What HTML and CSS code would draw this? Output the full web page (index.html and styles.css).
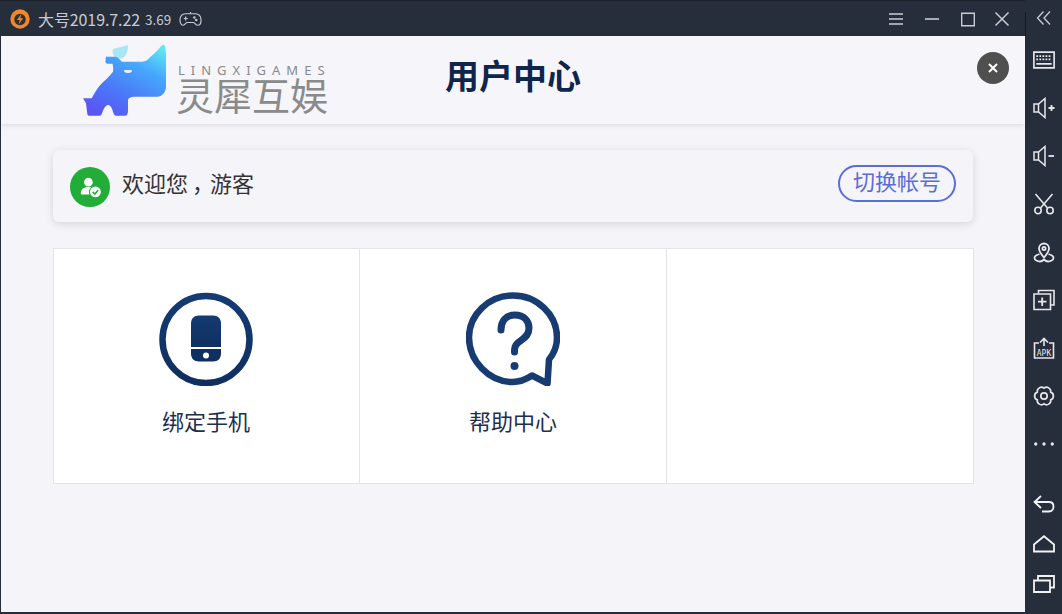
FILE: index.html
```html
<!DOCTYPE html>
<html lang="en">
<head>
    <meta charset="UTF-8">
    <meta name="viewport" content="width=device-width, initial-scale=1.0">
    <title>用户中心</title>
    <link rel="stylesheet" href="styles.css">
</head>
<body>
    <div id="window">
        <div id="main">
            <div id="titlebar">
                <svg class="app-logo" viewBox="0 0 20 20">
                    <circle cx="10" cy="10" r="9.700" fill="#f0872a"/>
                    <circle cx="10" cy="10.500" r="5.800" fill="#2f3038"/>
                    <path d="M11.500 4.800 6.800 11h3l-1.300 4.500 4.700-6.200h-3z" fill="#f0872a"/>
                </svg>
                <span class="app-name">大号2019.7.22</span>
                <span class="app-version">3.69</span>
                <svg class="gamepad" viewBox="0 0 24 16" fill="none" stroke="#c9ccd2" stroke-width="1.200">
                    <path d="M6.500 2.500h11c3 0 5.500 2.700 5.500 6.500 0 3.300-1.500 5.500-3.500 5.500-2.200 0-2.800-2.800-4.800-2.800H8.800c-2 0-2.600 2.800-4.800 2.800C2.500 14.500 1 12.300 1 9c0-3.800 2.500-6.500 5.500-6.500z"/>
                    <path d="M12 2.500V.8M5 7.500h4M7 5.500v4"/>
                    <circle cx="16" cy="6.500" r=".7"/>
                    <circle cx="18" cy="9" r=".7"/>
                </svg>
                <div class="window-controls">
                    <svg viewBox="0 0 16 16" fill="none" stroke="#c9ccd2" stroke-width="1.600"><path d="M1 3h14M1 8h14M1 13h14"/></svg>
                    <svg viewBox="0 0 16 16" fill="none" stroke="#c9ccd2" stroke-width="1.600"><path d="M1 8h14"/></svg>
                    <svg viewBox="0 0 16 16" fill="none" stroke="#c9ccd2" stroke-width="1.400"><path d="M1.700 2.200h12.600v12.600H1.700z"/></svg>
                    <svg viewBox="0 0 16 16" fill="none" stroke="#c9ccd2" stroke-width="1.500"><path d="M1.500 1.500l13 13M14.500 1.500l-13 13"/></svg>
                </div>
            </div>

            <div id="content">
                <div class="header">
                    <div class="brand">
                        <svg class="rhino" viewBox="0 0 84 72">
                            <defs>
                                <linearGradient id="rhino-fill" x1="0.85" y1="0" x2="0.25" y2="1">
                                    <stop offset="0" stop-color="#5ee6f7"/>
                                    <stop offset="0.3" stop-color="#46a8fb"/>
                                    <stop offset="0.65" stop-color="#4a7bf8"/>
                                    <stop offset="1" stop-color="#5a55f5"/>
                                </linearGradient>
                            </defs>
                            <path d="M30 5c5-1 11-3 15-4 0 5-1 10-5 13-3 1-6 0-8-1-2-2-3-5-2-8z" fill="#a9e6f5"/>
                            <path d="M24 12.700h8c3 0 5 3 7 5h18c3 0 6-.5 8-2.500 3-3 8-7 13-13 2-2 3-2 4 0 1 4 1 8 1 11v29c0 6-4 10.500-9 10.500H52c-4 0-7 1-7 4v10c0 3-1 5-3 5H33c-1 0-2-1-3-4-1-4-3-6.700-5-6.700s-4 3-5.500 7c-1 3-1.500 3.700-3 3.700H6c-1 0-1.500-.7-1.700-2L3 59.300 0 54.300h8.700C11 50 14 45 17 41.300c4-4.500 9-8 13-13.600.5-2.700 0-6-.5-8h-5c-1.500 0-2-1-2-2.500 0-3 .5-5 1.500-5z" fill="url(#rhino-fill)"/>
                            <path d="M41 26h8c0 2-1 3-4 3s-4-1-4-3z" fill="#e6f1fe"/>
                        </svg>
                        <div class="brand-text">
                            <div class="brand-en">LINGXIGAMES</div>
                            <div class="brand-cn">灵犀互娱</div>
                        </div>
                    </div>
                    <h1 class="page-title">用户中心</h1>
                    <div class="header-right">
                        <button class="close-btn" type="button">
                            <svg viewBox="0 0 12 12" fill="none" stroke="#fff" stroke-width="2"><path d="M2 2l8 8M10 2l-8 8"/></svg>
                        </button>
                    </div>
                </div>

                <div class="welcome-card">
                    <div class="avatar">
                        <svg viewBox="0 0 24 24" fill="#fff">
                            <circle cx="10.500" cy="7.500" r="4"/>
                            <path d="M3.500 18c0-4 3-6 7-6 1 0 2 .2 2.500.4-1.200 1-2 2.600-2 4.200 0 1 .2 1.700.6 2.400H5c-1 0-1.500-.3-1.500-1z"/>
                            <circle cx="17" cy="16.500" r="5"/>
                            <path d="M14.500 16.500l2 2 3-3.500" fill="none" stroke="#22ac38" stroke-width="1.400"/>
                        </svg>
                    </div>
                    <span class="welcome-text">欢迎您<span class="comma">，</span>游客</span>
                    <button class="switch-btn" type="button">切换帐号</button>
                </div>

                <div class="menu-grid">
                    <div class="menu-item">
                        <svg class="menu-icon" viewBox="0 -0.500 94 94">
                            <defs>
                                <linearGradient id="navy-v" x1="0" y1="0" x2="0" y2="1">
                                    <stop offset="0" stop-color="#153b73"/>
                                    <stop offset="1" stop-color="#0f2f5f"/>
                                </linearGradient>
                            </defs>
                            <circle cx="47" cy="47" r="43.500" fill="none" stroke="url(#navy-v)" stroke-width="6.500"/>
                            <path d="M32 31c0-5 3-8 8-8h14c5 0 8 3 8 8v23.500H32z" fill="url(#navy-v)"/>
                            <path d="M32 56.500h30V61c0 5-3 8-8 8H40c-5 0-8-3-8-8z" fill="#0f2f5f"/>
                            <circle cx="47" cy="63" r="3" fill="#fff"/>
                        </svg>
                        <span class="menu-label">绑定手机</span>
                    </div>
                    <div class="menu-item">
                        <svg class="menu-icon" viewBox="0 0 94 94" fill="none" stroke="#173c72" stroke-width="6.500" stroke-linecap="round" stroke-linejoin="round">
                            <path d="M47 3.500c24 0 44 19 44 42 0 9-3 16-8 22l-1.500 24-15.500-8c-6 4-12 6.500-19.500 6.500C23 90 3 69 3 45.500 3 22.500 23 3.500 47 3.500z"/>
                            <path d="M35 38c0-9 5-15 14-15s14 6 14 13c0 6-3 9-8 12.500-5 3-6.500 5.500-6.500 9.500v2" stroke-width="7"/>
                            <circle cx="48.500" cy="74" r="3" fill="#173c72" stroke-width="2"/>
                        </svg>
                        <span class="menu-label">帮助中心</span>
                    </div>
                    <div class="menu-item"></div>
                </div>
            </div>
        </div>

        <div id="sidebar">
            <div class="side-top">
                <svg viewBox="0 0 16 16" fill="none" stroke="#c9ccd2" stroke-width="1.300"><path d="M7.500 1.500 1.500 8l6 6.500M14 1.500 8 8l6 6.500"/></svg>
            </div>
            <div class="side-item">
                <svg viewBox="0 0 20 16" fill="none" stroke="#e6e8ec" stroke-width="1.500">
                    <path d="M.8.800h18.400v14.400H.8z"/>
                    <path d="M3 4.500h14M3 7.500h14" stroke-width="1.600" stroke-dasharray="1.600 1.200"/>
                    <path d="M3 11.500h14" stroke-width="1.600"/>
                </svg>
            </div>
            <div class="side-item">
                <svg viewBox="0 0 22 22" fill="none" stroke="#e6e8ec" stroke-width="1.500">
                    <path d="M1 7h4.500L12 1.500v19L5.500 15H1z"/>
                    <path d="M5.500 7v8"/>
                    <path d="M15.500 11h6M18.500 8v6" stroke-width="1.800"/>
                </svg>
            </div>
            <div class="side-item">
                <svg viewBox="0 0 22 22" fill="none" stroke="#e6e8ec" stroke-width="1.500">
                    <path d="M1 7h4.500L12 1.500v19L5.500 15H1z"/>
                    <path d="M5.500 7v8"/>
                    <path d="M15.500 11h5.500" stroke-width="1.800"/>
                </svg>
            </div>
            <div class="side-item">
                <svg viewBox="0 0 22 22" fill="none" stroke="#e6e8ec" stroke-width="1.600">
                    <path d="M2.500 1 14.500 15M19.500 1 7.500 15"/>
                    <circle cx="5" cy="17.500" r="3.200"/>
                    <circle cx="17" cy="17.500" r="3.200"/>
                </svg>
            </div>
            <div class="side-item">
                <svg viewBox="0 0 22 22" fill="none" stroke="#e6e8ec" stroke-width="1.800">
                    <path d="M11 16.500C8 13 6 10.500 6 7.500a5 5 0 0 1 10 0c0 3-2 5.500-5 9z"/>
                    <circle cx="11" cy="7.500" r="1.600"/>
                    <path d="M6.500 13C3.500 14 1.500 15.500 1.500 17c0 2 3 3.500 5.500 3.500 2 0 3-1 4-2 1 1 2 2 4 2 2.500 0 5.500-1.500 5.500-3.500 0-1.500-2-3-5-4"/>
                </svg>
            </div>
            <div class="side-item">
                <svg viewBox="0 0 22 22" fill="none" stroke="#e6e8ec" stroke-width="1.600">
                    <path d="M5.500 4.500V1.500h15.500v14.500h-3.500"/>
                    <path d="M1 5h16.500v15.500H1z"/>
                    <path d="M9.200 8.500v8.500M5 12.700h8.500" stroke-width="1.800"/>
                </svg>
            </div>
            <div class="side-item">
                <svg viewBox="0 0 22 22" fill="none" stroke="#e6e8ec" stroke-width="1.600">
                    <path d="M6 6H1.500v15h19V6H16"/>
                    <path d="M11 9V2M7 5.500 11 1.500l4 4"/>
                    <text class="apk-text" x="11" y="18.800">APK</text>
                </svg>
            </div>
            <div class="side-item">
                <svg viewBox="0 0 22 22" fill="none" stroke="#e6e8ec" stroke-width="1.700">
                    <path d="M11 3.200A4.200 4.200 0 0 1 17.750 7.100A4.200 4.200 0 0 1 17.750 14.900A4.200 4.200 0 0 1 11 18.800A4.200 4.200 0 0 1 4.250 14.900A4.200 4.200 0 0 1 4.250 7.100A4.200 4.200 0 0 1 11 3.200z"/>
                    <circle cx="11" cy="11" r="3.200"/>
                </svg>
            </div>
            <div class="side-item">
                <svg viewBox="0 0 24 6" fill="#e6e8ec">
                    <circle cx="3" cy="3" r="1.800"/>
                    <circle cx="12" cy="3" r="1.800"/>
                    <circle cx="21" cy="3" r="1.800"/>
                </svg>
            </div>
            <div class="side-nav">
                <div class="nav-item">
                    <svg viewBox="0 0 22 18" fill="none" stroke="#f2f3f5" stroke-width="1.800"><path d="M8 1 1.500 7 8 13M1.500 7H16c3 0 4.500 2 4.500 4.500S19 16.500 16 16.500H9"/></svg>
                </div>
                <div class="nav-item">
                    <svg viewBox="0 0 22 18" fill="none" stroke="#f2f3f5" stroke-width="1.800"><path d="M11 1.200 1 9.500v7h20v-7z"/></svg>
                </div>
                <div class="nav-item">
                    <svg viewBox="0 0 22 18" fill="none" stroke="#f2f3f5" stroke-width="1.800"><path d="M1 5.500h16V17H1zM5 5.500V1h16v11.500h-4"/></svg>
                </div>
            </div>
        </div>
    </div>
</body>
</html>
```

FILE: styles.css
```css
* {
    box-sizing: border-box;
}
body {
    margin: 0;
    font-family: "Noto Sans CJK SC", "Noto Sans", sans-serif;
    background: #262d3b;
}
button {
    font-family: inherit;
    padding: 0;
    cursor: pointer;
}
#window {
    display: flex;
    width: 1062px;
    height: 614px;
    overflow: hidden;
}
#main {
    width: 1025px;
    height: 614px;
    display: flex;
    flex-direction: column;
}

/* Title bar */
#titlebar {
    height: 36px;
    flex: none;
    display: flex;
    align-items: center;
    padding-left: 10px;
    color: #c9ccd2;
    background: #262d3b;
    border-top: 1px solid #1b202b;
}
.app-logo {
    width: 20px;
    height: 20px;
}
.app-name {
    margin-left: 8px;
    font-size: 16px;
    letter-spacing: -0.1px;
}
.app-version {
    margin-left: 5px;
    font-size: 13.500px;
}
.gamepad {
    width: 23px;
    height: 16px;
    margin-left: 8px;
}
.window-controls {
    margin-left: auto;
    margin-right: 15px;
    display: flex;
    gap: 20px;
}
.window-controls svg {
    width: 16px;
    height: 16px;
}
.window-controls svg:last-child {
    margin-left: -2px;
}

/* Page area */
#content {
    flex: 1;
    margin: 0 0 2px 1px;
    background: #f4f4f9;
}
.header {
    height: 88px;
    display: grid;
    grid-template-columns: 1fr auto 1fr;
    align-items: center;
    background: #f5f5fa;
    box-shadow: 0 1px 5px rgba(0, 0, 0, 0.12);
}
.brand {
    display: flex;
    align-items: flex-end;
    height: 88px;
    padding: 8px 0 8px 82px;
}
.rhino {
    flex: none;
    width: 84px;
    height: 72px;
}
.brand-text {
    margin-left: 11px;
    padding-bottom: 3px;
    color: #8a8a8a;
}
.brand-en {
    font-family: "Noto Sans", sans-serif;
    font-size: 13px;
    line-height: 12px;
    letter-spacing: 6px;
    white-space: nowrap;
}
.brand-cn {
    font-size: 38px;
    line-height: 38px;
    margin: -1px 0 0 -2px;
    white-space: nowrap;
}
.page-title {
    margin: 0 0 11px;
    font-size: 34px;
    line-height: 44px;
    font-weight: 700;
    color: #10254c;
}
.header-right {
    display: flex;
    justify-content: flex-end;
    padding: 0 16px 24px 0;
}
.close-btn {
    width: 32px;
    height: 32px;
    border: none;
    border-radius: 50%;
    background: #4f4f4f;
    display: flex;
    align-items: center;
    justify-content: center;
}
.close-btn svg {
    width: 12px;
    height: 12px;
}

/* Welcome card */
.welcome-card {
    width: 920px;
    height: 72px;
    margin: 26px 0 0 52px;
    padding: 0 17px;
    display: flex;
    align-items: center;
    background: #f4f4f9;
    border-radius: 6px;
    box-shadow: 0 2px 9px rgba(0, 0, 0, 0.13);
}
.avatar {
    width: 40px;
    height: 40px;
    margin-top: 1px;
    border-radius: 50%;
    background: #22ac38;
    display: flex;
    align-items: center;
    justify-content: center;
}
.avatar svg {
    width: 26px;
    height: 26px;
}
.welcome-text {
    margin: 0 0 8px 12px;
    font-size: 22px;
    color: #333;
}
.comma {
    display: inline-block;
    width: 22px;
    text-align: center;
    font-feature-settings: "palt";
}
.switch-btn {
    margin: 0 0 6px auto;
    width: 118px;
    height: 37px;
    padding-bottom: 6px;
    border: 2px solid #5a6ed6;
    border-radius: 19px;
    background: transparent;
    font-size: 22px;
    line-height: 20px;
    color: #5a6ed6;
}

/* Menu grid */
.menu-grid {
    width: 921px;
    height: 236px;
    margin: 26px 0 0 52px;
    display: grid;
    grid-template-columns: 306px 307px 1fr;
    background: #fff;
    border: 1px solid #e3e3e8;
}
.menu-item {
    display: flex;
    flex-direction: column;
    align-items: center;
    padding-top: 43px;
    border-right: 1px solid #e3e3e8;
}
.menu-item:first-child {
    padding-right: 1px;
}
.menu-item:last-child {
    border-right: none;
}
.menu-icon {
    width: 94px;
    height: 94px;
}
.menu-label {
    margin-top: 18px;
    font-size: 22px;
    line-height: 32px;
    color: #1c2f4f;
}

/* Right tool strip */
#sidebar {
    width: 37px;
    height: 614px;
    position: relative;
    display: flex;
    flex-direction: column;
    align-items: center;
}
#sidebar::before {
    content: "";
    position: absolute;
    left: 0;
    top: 12px;
    width: 1px;
    height: 24px;
    background: #151a24;
}
.side-top {
    height: 36px;
    display: flex;
    align-items: center;
    justify-content: center;
}
.side-top svg {
    width: 16px;
    height: 16px;
}
.side-item {
    height: 48px;
    width: 37px;
    display: flex;
    align-items: center;
    justify-content: center;
}
.side-item svg {
    width: 22px;
    height: 22px;
}
.side-nav {
    margin-top: 16px;
}
.nav-item {
    height: 40px;
    width: 37px;
    display: flex;
    align-items: center;
    justify-content: center;
}
.nav-item svg {
    width: 22px;
    height: 18px;
}
.apk-text {
    font-family: "DejaVu Sans Mono", monospace;
    font-size: 8px;
    text-anchor: middle;
    fill: #e6e8ec;
    stroke: none;
}
```
